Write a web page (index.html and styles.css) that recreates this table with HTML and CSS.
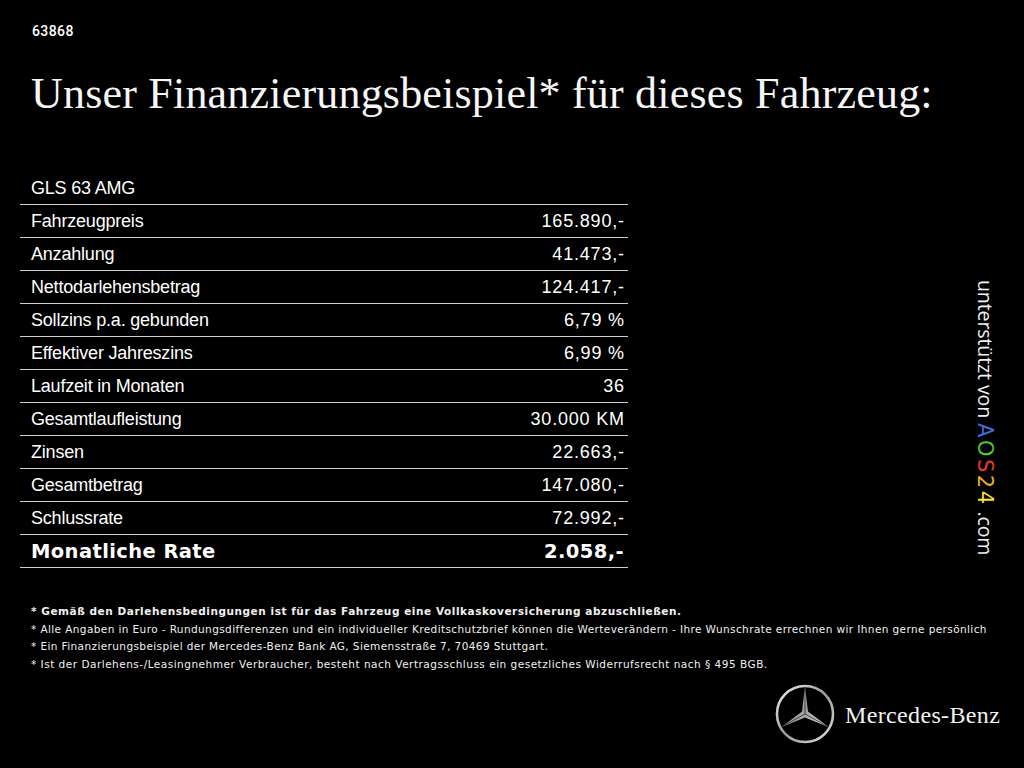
FILE: index.html
```html
<!DOCTYPE html>
<html lang="de">
<head>
<meta charset="utf-8">
<title>Finanzierungsbeispiel</title>
<link rel="stylesheet" href="styles.css">
</head>
<body>
<div class="page">
  <div class="code">63868</div>
  <h1 class="title">Unser Finanzierungsbeispiel* für dieses Fahrzeug:</h1>
  <div class="table">
    <div class="row head"><span>GLS 63 AMG</span></div>
    <div class="row"><span>Fahrzeugpreis</span><span class="v">165.890,-</span></div>
    <div class="row"><span>Anzahlung</span><span class="v">41.473,-</span></div>
    <div class="row"><span>Nettodarlehensbetrag</span><span class="v">124.417,-</span></div>
    <div class="row"><span>Sollzins p.a. gebunden</span><span class="v">6,79 %</span></div>
    <div class="row"><span>Effektiver Jahreszins</span><span class="v">6,99 %</span></div>
    <div class="row"><span>Laufzeit in Monaten</span><span class="v">36</span></div>
    <div class="row"><span>Gesamtlaufleistung</span><span class="v">30.000 KM</span></div>
    <div class="row"><span>Zinsen</span><span class="v">22.663,-</span></div>
    <div class="row"><span>Gesamtbetrag</span><span class="v">147.080,-</span></div>
    <div class="row"><span>Schlussrate</span><span class="v">72.992,-</span></div>
    <div class="row total"><span>Monatliche Rate</span><span>2.058,-</span></div>
  </div>
  <div class="notes">
    <p class="bold">* Gemäß den Darlehensbedingungen ist für das Fahrzeug eine Vollkaskoversicherung abzuschließen.</p>
    <p>* Alle Angaben in Euro - Rundungsdifferenzen und ein individueller Kreditschutzbrief können die Werteverändern - Ihre Wunschrate errechnen wir Ihnen gerne persönlich</p>
    <p>* Ein Finanzierungsbeispiel der Mercedes-Benz Bank AG, Siemensstraße 7, 70469 Stuttgart.</p>
    <p class="wide">* Ist der Darlehens-/Leasingnehmer Verbraucher, besteht nach Vertragsschluss ein gesetzliches Widerrufsrecht nach § 495 BGB.</p>
  </div>
  <div class="side">unterstützt von <span class="logo"><span class="a">A</span><span class="o">O</span><span class="s">S</span><span class="t">2</span><span class="f">4</span></span> .com</div>
  <div class="brand">
    <svg class="star" width="62" height="62" viewBox="0 0 62 62">
      <defs>
        <linearGradient id="g" x1="0" y1="0" x2="1" y2="1">
          <stop offset="0" stop-color="#f2f2f2"/>
          <stop offset="0.5" stop-color="#9a9a9a"/>
          <stop offset="1" stop-color="#e0e0e0"/>
        </linearGradient>
      </defs>
      <circle cx="31" cy="31" r="28" fill="none" stroke="url(#g)" stroke-width="2.6"/>
      <path d="M31 4 L34 28.5 L54.5 44 L31 34.5 L7.5 44 L28 28.5 Z" fill="url(#g)"/>
      <path d="M31 4 L31 31 M31 31 L54.5 44 M31 31 L7.5 44" stroke="#2a2a2a" stroke-width="0.8"/>
    </svg>
    <span class="mb">Mercedes-Benz</span>
  </div>
</div>
</body>
</html>
```
FILE: styles.css
```css
html, body {
  margin: 0;
  padding: 0;
  background: #000;
}
.page {
  width: 1024px;
  height: 768px;
  position: relative;
  background: #000;
  color: #fff;
  overflow: hidden;
  padding-top: 22px;
  box-sizing: border-box;
}
.code {
  font-family: "Roboto", sans-serif;
  font-size: 14px;
  font-weight: 500;
  margin-left: 32px;
  line-height: 18px;
  letter-spacing: 0.4px;
}
.title {
  font-family: "Liberation Serif", serif;
  font-weight: normal;
  font-size: 44px;
  line-height: 50px;
  margin: 29px 0 0 31px;
  letter-spacing: 0.2px;
  color: #f6f6f6;
}
.table {
  margin: 53px 0 0 20px;
  width: 608px;
  font-family: "Liberation Sans", sans-serif;
  font-size: 18px;
  letter-spacing: -0.2px;
}
.row {
  display: flex;
  justify-content: space-between;
  align-items: center;
  height: 32px;
  padding: 0 4px 0 11px;
  border-bottom: 1px solid #d0d0d0;
}
.row .v {
  letter-spacing: 0.8px;
  margin-right: -0.8px;
}
.row.total {
  font-family: "DejaVu Sans", sans-serif;
  font-weight: bold;
  font-size: 19.5px;
  letter-spacing: 0.4px;
}
.notes {
  margin: 35px 0 0 31px;
  font-family: "DejaVu Sans", sans-serif;
  font-size: 10.5px;
  letter-spacing: 0.4px;
  color: #f0f0f0;
}
.notes p {
  margin: 0;
  line-height: 17.7px;
}
.notes p.bold {
  font-weight: bold;
  letter-spacing: 0.55px;
}
.notes p.wide {
  letter-spacing: 0.5px;
}
.side {
  position: absolute;
  left: 974px;
  top: 280px;
  writing-mode: vertical-rl;
  font-family: "Open Sans", sans-serif;
  font-size: 19.5px;
  line-height: 22px;
  letter-spacing: -0.1px;
  color: #f0f0f0;
  white-space: nowrap;
}
.side .logo {
  font-family: "DejaVu Sans", sans-serif;
  font-size: 21px;
  letter-spacing: 2.5px;
  margin: 0 2px 0 7px;
}
.side .a { color: #3f6fd6; }
.side .o { color: #58c43a; }
.side .s { color: #e23a2a; }
.side .t { color: #f0b01e; }
.side .f { color: #f3e03a; }
.brand {
  position: absolute;
  left: 774px;
  top: 683px;
  display: flex;
  align-items: center;
  gap: 9px;
}
.star {
  display: block;
}
.mb {
  font-family: "Liberation Serif", serif;
  font-size: 24px;
  letter-spacing: 0.35px;
  color: #f2f2f2;
  margin-top: 2px;
}
```
